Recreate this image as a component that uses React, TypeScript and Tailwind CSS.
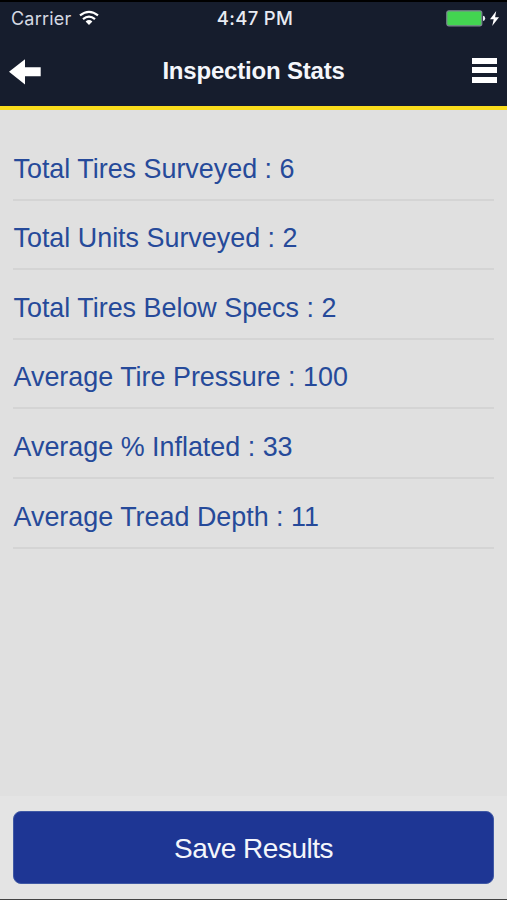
const stats = [
  { label: 'Total Tires Surveyed', value: 6 },
  { label: 'Total Units Surveyed', value: 2 },
  { label: 'Total Tires Below Specs', value: 2 },
  { label: 'Average Tire Pressure', value: 100 },
  { label: 'Average % Inflated', value: 33 },
  { label: 'Average Tread Depth', value: 11 },
];

const StatusBar = () => (
  <div className="grid h-[34px] grid-cols-3 items-center pl-[11px] pr-[8px] font-['Inter',sans-serif] text-[18px] leading-none">
    <div className="flex items-center gap-[8px] text-[#d5d9e2]">
      <span className="tracking-[0.2px]">Carrier</span>
      <svg className="mb-[2px]" width="20" height="16" viewBox="0 0 20 16" fill="none" stroke="#fff" strokeWidth="2.2">
        <path d="M1 5.4Q10-1.8 19 5.4" />
        <path d="M4 9.1Q10 4.1 16 9.1" />
        <path d="M6.6 11.4Q10 8.6 13.4 11.4L10 15Z" fill="#fff" stroke="none" />
      </svg>
    </div>
    <span className="pb-[2px] text-center text-[18.5px] font-medium tracking-[0.3px] text-[#e8ebf2]">4:47 PM</span>
    <div className="flex items-center justify-end gap-[4px] pb-px">
      <svg width="40" height="17" viewBox="0 0 40 17">
        <rect x="0.8" y="0.8" width="35" height="15" rx="2" fill="#43d551" stroke="#7c8792" strokeWidth="1.2" />
        <path d="M37 5.8Q39.2 6 39.2 8.4T37 11Z" fill="#e8ebf2" />
      </svg>
      <svg width="9" height="15" viewBox="0 0 9 15" fill="#fff">
        <path d="M6.2 0 0 8.3H3.7L2.2 15 9 6.2H5.1Z" />
      </svg>
    </div>
  </div>
);

const App = () => {
  return (
    <div className="flex h-[900px] w-full flex-col border-t-2 border-b border-t-black border-b-[#444] bg-[#e0e0e0] font-['Liberation_Sans',Arial,sans-serif]">
      <header className="h-[108px] border-b-4 border-[#fadc1c] bg-[#161d2d]">
        <StatusBar />
        <div className="flex h-[70px] items-center justify-between pl-[9px] pr-[10px]">
          <button aria-label="Back" className="pt-[2px]">
            <svg width="32" height="26" viewBox="0 0 32 26" fill="#fff">
              <path d="M0 12.8 16 .2V8.3H31.7V17.3H16V25.5Z" />
            </svg>
          </button>
          <h1 className="pr-[6px] text-[24px] font-bold leading-none tracking-[-0.2px] text-[#f4f6fb]">
            Inspection Stats
          </h1>
          <button aria-label="Menu" className="flex flex-col gap-[3.5px] pb-[2px]">
            <span className="h-[6px] w-[25px] bg-white" />
            <span className="h-[6px] w-[25px] bg-white" />
            <span className="h-[6px] w-[25px] bg-white" />
          </button>
        </div>
      </header>

      <main className="flex-1 px-[13px] pt-[21px]">
        <ul>
          {stats.map((stat) => (
            <li
              key={stat.label}
              className="flex h-[69.6px] items-end border-b-2 border-[#d4d4d4] pb-[15px] pl-[0.5px] text-[26.9px] leading-[30px] text-[#264a9a]"
            >
              {stat.label} : {stat.value}
            </li>
          ))}
        </ul>
      </main>

      <footer className="h-[103px] bg-[#e4e4e4] px-[13px] pt-[15px]">
        <button className="h-[73px] w-full rounded-[8px] border border-[#4059a5] bg-[#1e3694] pt-[3px] text-[28px] leading-none tracking-[-0.5px] text-[#f4f6fb]">
          Save Results
        </button>
      </footer>
    </div>
  );
};

export default App;
